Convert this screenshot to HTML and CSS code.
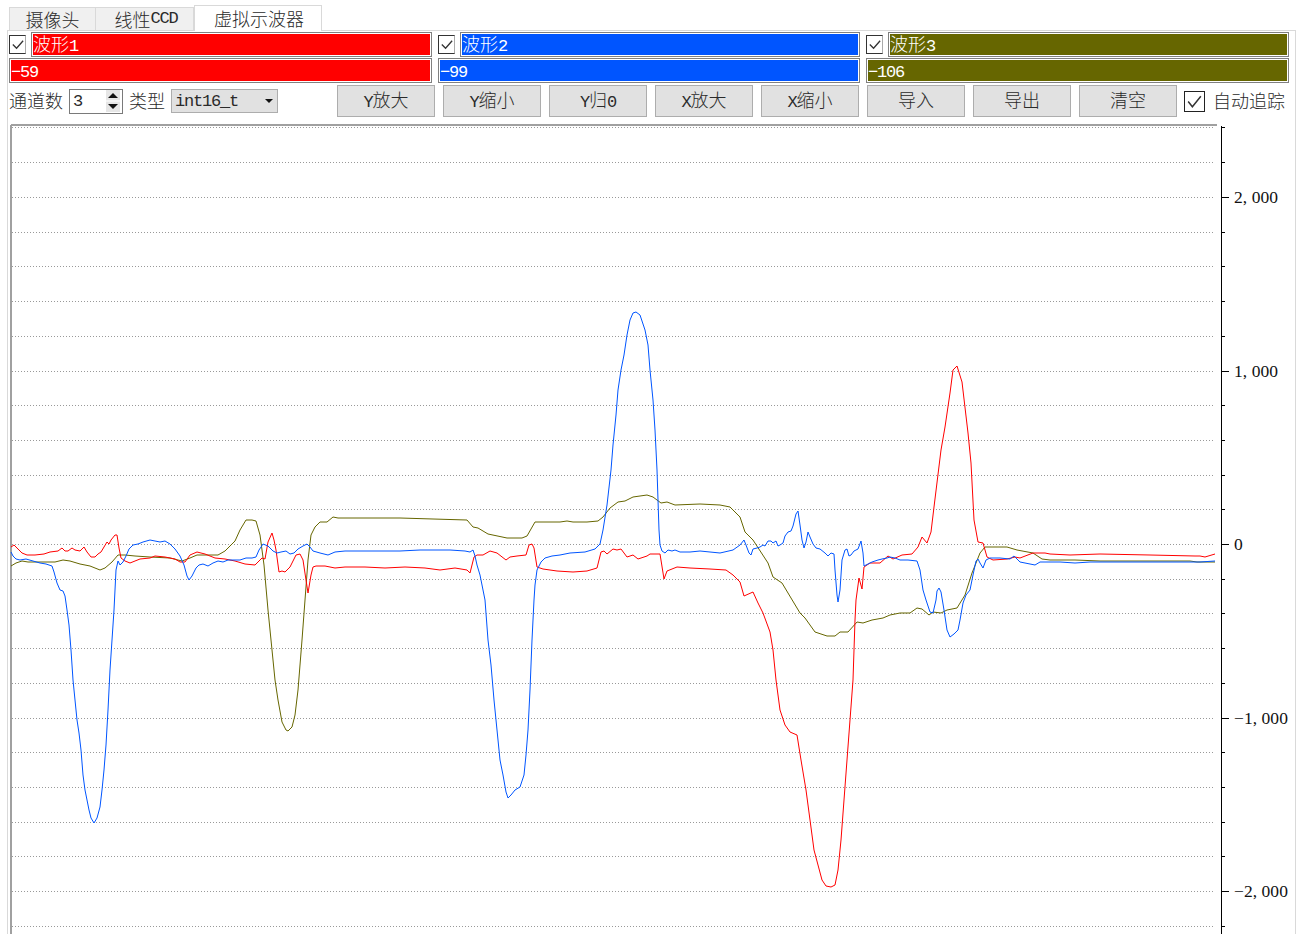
FILE: index.html
```html
<!DOCTYPE html>
<html lang="zh">
<head>
<meta charset="utf-8">
<title>虚拟示波器</title>
<link rel="stylesheet" href="styles.css">
</head>
<body>
<div class="tabs">
  <div class="tab t1">摄像头</div>
  <div class="tab t2">线性<span class="lat">CCD</span></div>
  <div class="tab t3 active">虚拟示波器</div>
</div>
<div class="panel">
  <div class="channels">
    <div class="channel">
      <div class="title-row">
        <span class="chk open"><svg viewBox="0 0 16 18" class="tick"><path d="M3 9l4 4 7-8"/></svg></span>
        <div class="field red">波形<span class="lat">1</span></div>
      </div>
      <div class="field red value"><span class="lat">−59</span></div>
    </div>
    <div class="channel">
      <div class="title-row">
        <span class="chk open"><svg viewBox="0 0 16 18" class="tick"><path d="M3 9l4 4 7-8"/></svg></span>
        <div class="field blue">波形<span class="lat">2</span></div>
      </div>
      <div class="field blue value"><span class="lat">−99</span></div>
    </div>
    <div class="channel">
      <div class="title-row">
        <span class="chk open"><svg viewBox="0 0 16 18" class="tick"><path d="M3 9l4 4 7-8"/></svg></span>
        <div class="field olive">波形<span class="lat">3</span></div>
      </div>
      <div class="field olive value"><span class="lat">−106</span></div>
    </div>
  </div>
  <div class="controls">
    <span class="label">通道数</span>
    <div class="spin">
      <span class="lat">3</span>
      <svg class="spin-btns" viewBox="0 0 14 22"><rect width="14" height="22" fill="#e6e6e6"/><rect y="10.5" width="14" height="1" fill="#fff"/><path d="M7 3l5 5H2z" fill="#111"/><path d="M7 19l5-5H2z" fill="#111"/></svg>
    </div>
    <span class="label type-label">类型</span>
    <div class="combo"><span class="lat">int16_t</span><i class="caret"></i></div>
    <div class="buttons">
      <button class="btn"><span class="lat">Y</span>放大</button>
      <button class="btn"><span class="lat">Y</span>缩小</button>
      <button class="btn"><span class="lat">Y</span>归<span class="lat">0</span></button>
      <button class="btn"><span class="lat">X</span>放大</button>
      <button class="btn"><span class="lat">X</span>缩小</button>
      <button class="btn">导入</button>
      <button class="btn">导出</button>
      <button class="btn">清空</button>
    </div>
    <span class="chk big"><svg viewBox="0 0 18 18" class="tick"><path d="M3 9l4 5 8-10"/></svg></span>
    <span class="label auto">自动追踪</span>
  </div>
  <svg class="plot" viewBox="8 118 1288 816" width="1288" height="816">
    <path class="frame" d="M11 125H1217M11 125V934"/>
    <path class="grid" d="M12 127.5H1215M12 162.5H1215M12 197.5H1215M12 232.5H1215M12 266.5H1215M12 301.5H1215M12 336.5H1215M12 371.5H1215M12 405.5H1215M12 440.5H1215M12 475.5H1215M12 509.5H1215M12 544.5H1215M12 579.5H1215M12 613.5H1215M12 648.5H1215M12 683.5H1215M12 718.5H1215M12 752.5H1215M12 787.5H1215M12 822.5H1215M12 856.5H1215M12 891.5H1215M12 926.5H1215"/>
    <path class="axis" d="M1221.5 126V934M1221 127.5h4M1221 162.5h4M1221 197.5h8M1221 232.5h4M1221 266.5h4M1221 301.5h4M1221 336.5h4M1221 371.5h8M1221 405.5h4M1221 440.5h4M1221 475.5h4M1221 509.5h4M1221 544.5h8M1221 579.5h4M1221 613.5h4M1221 648.5h4M1221 683.5h4M1221 718.5h8M1221 752.5h4M1221 787.5h4M1221 822.5h4M1221 856.5h4M1221 891.5h8M1221 926.5h4"/>
    <text class="ylab" x="1234" y="203">2, 000</text>
    <text class="ylab" x="1234" y="377">1, 000</text>
    <text class="ylab" x="1234" y="550">0</text>
    <text class="ylab" x="1234" y="724">−1, 000</text>
    <text class="ylab" x="1234" y="897">−2, 000</text>
    <polyline class="wave w-olive" points="11,566 16,563 22,561 28,562 40,562 55,562 63,560 70,561 80,564 90,566 100,570 105,568 112,562 118,555 125,555 135,556 150,557 170,558 182,561 190,558 197,555 218,555 225,551 235,541 240,530 246,520 252,520 256,521 260,535 264,565 268,610 272,650 275,680 278,700 282,722 286,730 288,731 292,727 295,715 298,690 302,640 305,600 308,560 311,535 315,527 320,522 327,522 333,517 338,518 400,518 433,519 467,520 473,527 478,528 488,534 507,538 522,538 527,536 535,522 560,522 567,521 573,522 587,522 598,521 603,517 610,508 618,502 625,501 633,497 647,495 653,497 661,503 667,502 675,505 700,504 720,505 730,507 740,517 745,532 753,540 768,563 773,577 782,583 800,613 805,618 815,632 827,636 835,636 840,632 848,632 857,622 863,623 872,620 883,618 890,615 900,613 910,613 917,608 922,609 929,615 933,612 941,613 947,610 957,608 965,595 972,573 980,553 985,547 1007,547 1017,550 1033,553 1042,559 1050,560 1075,560 1100,561 1150,561 1190,561 1197,562 1215,562"/>
    <polyline class="wave w-red" points="11,547 14,545 18,549 22,553 27,555 35,555 44,554 50,552 58,551 62,548 65,551 68,551 72,548 75,550 80,551 84,547 87,552 91,557 95,557 98,554 101,552 104,547 107,542 109,544 111,540 115,535 117,535 119,548 121,558 125,561 130,563 135,561 140,559 150,558 155,556 165,557 175,559 180,562 185,562 190,555 197,552 205,554 215,558 225,559 235,561 245,564 255,565 258,562 262,558 265,559 268,542 272,533 274,540 276,550 279,572 282,571 285,572 290,567 296,555 300,554 303,560 306,580 308,593 311,575 313,567 316,566 325,566 335,568 345,567 365,567 385,568 405,567 425,568 440,570 455,568 467,570 470,573 474,557 477,555 483,555 490,551 497,553 506,560 510,557 517,556 526,555 529,545 532,544 534,548 537,567 543,569 557,571 573,572 587,571 597,568 601,552 604,551 607,554 613,549 617,550 621,549 627,557 633,555 638,559 647,556 650,554 660,554 664,579 667,571 677,567 690,568 710,569 726,570 733,575 740,582 744,596 753,592 758,603 763,613 770,632 773,650 776,680 780,710 785,725 790,732 797,735 801,760 806,790 810,820 814,850 818,865 822,880 826,886 831,887 835,885 838,870 841,840 844,800 847,760 850,720 853,680 854,650 855,620 856,600 859,578 862,589 864,567 870,563 880,563 888,556 893,559 902,555 912,554 918,547 922,537 927,543 931,532 934,507 941,450 945,427 950,393 953,370 957,366 962,382 968,433 971,463 974,520 978,542 983,543 987,557 993,560 1007,559 1015,557 1020,558 1033,553 1045,553 1050,554 1070,555 1100,554 1150,555 1195,556 1200,556 1205,557 1215,554"/>
    <polyline class="wave w-blue" points="11,552 13,556 16,559 20,560 26,559 33,561 40,563 46,564 52,566 54,572 57,583 60,590 63,591 65,596 67,610 69,625 71,650 73,680 75,700 77,720 79,733 81,750 83,775 85,790 87,800 89,810 91,818 94,823 97,818 100,807 102,790 104,770 106,745 108,710 110,670 112,640 114,610 116,570 118,561 120,565 123,562 126,556 129,549 133,545 138,544 143,542 150,540 155,541 160,542 165,541 170,544 175,549 180,556 184,565 187,576 189,580 192,576 196,568 199,565 203,564 208,566 213,563 218,561 223,562 228,560 240,560 246,558 252,558 256,557 259,550 263,544 268,546 273,551 277,553 281,552 286,551 290,554 294,553 298,549 303,546 307,544 310,547 313,551 320,553 328,555 335,552 345,551 365,551 380,551 400,551 420,550 450,550 465,551 470,552 473,550 475,556 477,565 480,575 483,590 485,600 488,640 491,665 494,700 497,730 500,760 503,775 506,792 508,798 511,795 515,790 520,787 524,775 526,755 528,730 530,690 532,640 534,600 535,585 537,570 541,562 545,558 552,556 560,555 570,553 585,552 595,549 600,544 603,530 607,505 611,470 613,445 616,415 618,390 621,370 624,355 627,335 630,320 633,313 636,312 640,315 645,330 648,345 650,370 653,400 655,430 657,470 658,500 659,530 660,545 662,551 665,553 668,550 672,551 675,550 680,552 690,552 700,551 710,552 720,553 733,550 740,545 744,540 746,545 749,553 751,555 753,549 757,548 760,547 763,545 765,546 768,541 771,541 773,543 776,541 778,546 780,545 783,543 785,536 788,532 791,531 793,526 796,514 798,511 800,525 802,540 804,548 806,542 808,532 810,537 813,544 816,548 820,549 825,553 828,556 831,553 834,554 835,570 837,595 838,602 840,590 842,560 845,550 847,549 849,556 851,555 854,551 858,549 861,541 863,553 864,566 868,564 872,562 878,560 882,559 887,558 890,557 895,558 900,560 908,560 917,561 920,570 923,590 926,600 930,612 933,613 936,600 937,591 939,588 941,592 944,610 947,630 950,637 954,634 956,632 958,630 960,620 963,603 966,595 970,590 973,575 976,561 978,559 980,563 983,568 986,560 990,558 1000,558 1010,559 1014,556 1020,562 1030,564 1035,565 1040,562 1050,562 1060,562 1075,563 1090,562 1120,562 1150,562 1200,562 1215,561"/>
  </svg>
</div>
</body>
</html>
```
FILE: styles.css
```css
* { box-sizing: border-box; }
html, body { margin: 0; padding: 0; height: 934px; overflow: hidden; background: #fff; }
body { font-family: "Noto Sans CJK SC", "Liberation Sans", sans-serif; font-size: 18px; color: #2a2a2a; font-weight: 300; }
.lat { font-family: "Liberation Mono", monospace; font-size: 17px; letter-spacing: -1.2px; font-weight: 400; }

.tabs { display: flex; align-items: flex-end; height: 30px; padding-left: 9px; }
.tab { height: 23px; background: #f0f0f0; border: 1px solid #d9d9d9; border-bottom: 0; display: flex; align-items: center; justify-content: center; line-height: 22px; }
.t1 { width: 87px; }
.t2 { width: 98px; border-left: 0; padding-left: 3px; }
.t3 { width: 128px; }
.tab.active { background: #fff; height: 26px; margin-bottom: -1px; border-left: 1px solid #d9d9d9; position: relative; z-index: 1; padding: 0 0 2px 2px; }

.panel { margin-left: 7px; width: 1289px; height: 904px; border: 1px solid #d9d9d9; border-bottom: 0; padding: 1px 0 0 1px; }
.channels { display: grid; grid-template-columns: 423px 422px 423px; column-gap: 6px; }
.channel { display: flex; flex-direction: column; gap: 1px; }
.title-row { display: flex; align-items: center; gap: 5px; height: 25px; }
.chk { display: block; flex: none; width: 17px; height: 19px; border: 1px solid #333; background: #fff; }
.chk.open { border-right-color: #aaa; }
.chk.big { width: 21px; height: 21px; margin-left: 7px; border-color: #222; }
.tick { display: block; width: 100%; height: 100%; fill: none; stroke: #333; stroke-width: 1.4; }
.field { flex: 1; height: 25px; border: 1px solid #808080; outline: 1px solid #fff; outline-offset: -2px; color: #fff; line-height: 21px; padding-left: 1px; white-space: nowrap; }
.value { flex: none; line-height: 20px; }
.red { background: #ff0000; }
.blue { background: #0055ff; }
.olive { background: #666600; }

.controls { display: flex; align-items: center; height: 32px; margin-top: 2px; }
.label { line-height: 24px; white-space: nowrap; position: relative; top: -1px; }
.spin { width: 54px; height: 25px; margin-left: 6px; border: 1px solid #7a7a7a; display: flex; align-items: center; justify-content: space-between; padding: 0 2px 0 3px; background: #fff; }
.spin-btns { width: 14px; height: 22px; display: block; }
.type-label { margin-left: 6px; }
.combo { width: 107px; height: 24px; margin-left: 6px; background: #e1e1e1; border: 1px solid #adadad; display: flex; align-items: center; justify-content: space-between; padding: 0 4px 0 3px; }
.caret { width: 0; height: 0; border-left: 4px solid transparent; border-right: 4px solid transparent; border-top: 4px solid #111; }
.buttons { display: flex; gap: 8px; margin-left: 59px; }
.btn { width: 98px; height: 32px; padding: 0 0 4px; background: #e1e1e1; border: 1px solid #adadad; border-radius: 0; font: inherit; color: inherit; }
.auto { margin-left: 8px; }

.plot { display: block; margin: 1px 0 0 -1px; }
.frame { fill: none; stroke: #a0a0a0; stroke-width: 2; }
.grid { fill: none; stroke: #999; stroke-width: 1; stroke-dasharray: 1 2; }
.axis { fill: none; stroke: #000; stroke-width: 1; }
.ylab { font-family: "Liberation Serif", serif; font-size: 17.5px; letter-spacing: 0.05px; fill: #111; }
.wave { fill: none; stroke-width: 1; stroke-linejoin: round; }
.w-red { stroke: #ff0000; }
.w-blue { stroke: #0055ff; }
.w-olive { stroke: #666600; }
```
